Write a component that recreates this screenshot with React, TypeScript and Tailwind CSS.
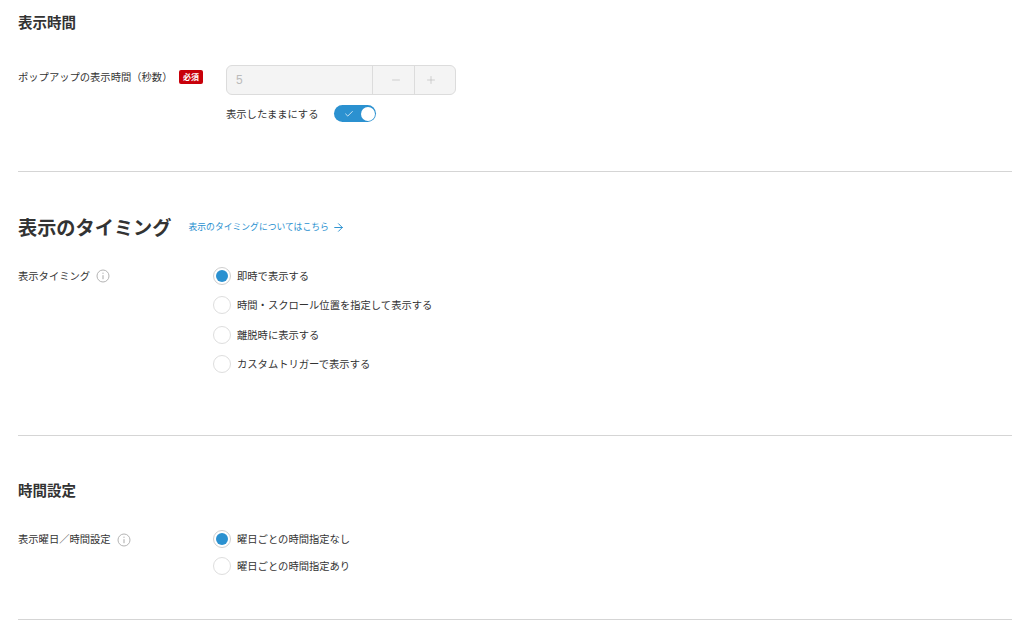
import React from "react";
import { ArrowRight, Check, Minus, Plus } from "lucide-react";

function Radio({ checked, label }: { checked?: boolean; label: string }) {
  return (
    <div className="flex items-center gap-[6px] h-[20px]">
      <span className={`w-[18px] h-[18px] rounded-full border bg-white flex items-center justify-center shrink-0 ${checked ? "border-[#cfcfcf]" : "border-[#dedede]"}`}>
        {checked && <span className="w-[12px] h-[12px] rounded-full bg-[#2b91d0]" />}
      </span>
      <span className="text-[10.3px] text-[#333] whitespace-nowrap">{label}</span>
    </div>
  );
}

function Info() {
  return (
    <svg width="14" height="14" viewBox="0 0 14 14" fill="none" className="shrink-0 mt-[1px]">
      <circle cx="7" cy="7" r="6" stroke="#b4b4b4" strokeWidth="1" />
      <path d="M7 6.2V10.2" stroke="#a8a8a8" strokeWidth="1" />
      <circle cx="7" cy="4.2" r="0.6" fill="#a8a8a8" />
    </svg>
  );
}

export default function App() {
  return (
    <div className="w-[1024px] h-[631px] overflow-hidden bg-white text-[#333] pl-[18px] pr-[12px]" style={{ fontFamily: '"Noto Sans CJK JP", "Liberation Sans", sans-serif' }}>
      <section className="h-[172px] border-b border-[#d5d5d5] pt-[12px]">
        <h2 className="text-[14.5px] font-bold leading-[20px]">表示時間</h2>
        <div className="flex mt-[33px]">
          <div className="w-[208px] flex items-start gap-[6.5px] pt-[5px]">
            <span className="text-[10.3px] leading-[14px] whitespace-nowrap">ポップアップの表示時間（秒数）</span>
            <span className="bg-[#c8000a] text-white text-[8px] font-bold rounded-[2px] w-[24px] h-[14px] leading-[14px] text-center shrink-0">必須</span>
          </div>
          <div>
            <div className="flex w-[230px] h-[30px] border border-[#dcdcdc] rounded-[6px] bg-[#f4f4f4]">
              <span className="flex-1 pl-[9px] pt-[1px] text-[12px] leading-[27px] text-[#bbb]" style={{ fontFamily: '"Liberation Sans", sans-serif' }}>5</span>
              <span className="w-[42px] border-l border-[#dcdcdc] pl-[5px] flex items-center justify-center"><Minus size={12} strokeWidth={1.2} className="text-[#b5b5b5]" /></span>
              <span className="w-[41px] border-l border-[#dcdcdc] pr-[8px] flex items-center justify-center"><Plus size={12} strokeWidth={1.2} className="text-[#b5b5b5]" /></span>
            </div>
            <div className="flex items-center gap-[16px] mt-[10px]">
              <span className="text-[10.3px] whitespace-nowrap">表示したままにする</span>
              <span className="w-[42px] h-[17px] rounded-full bg-[#2b91d0] flex items-center justify-end gap-[7px] pr-[1.5px]">
                <Check size={10} strokeWidth={1.8} className="text-white" />
                <span className="w-[14px] h-[14px] rounded-full bg-white" />
              </span>
            </div>
          </div>
        </div>
      </section>
      <section className="h-[264px] border-b border-[#d5d5d5] pt-[41px]">
        <div className="flex items-center gap-[17px]">
          <h2 className="text-[19.2px] font-bold leading-[28px] whitespace-nowrap">表示のタイミング</h2>
          <a className="flex items-center gap-[3px] text-[8.8px] text-[#2b91d0] whitespace-nowrap">表示のタイミングについてはこちら<ArrowRight size={13} strokeWidth={1.8} /></a>
        </div>
        <div className="flex mt-[24.5px]">
          <div className="w-[195px] flex gap-[6px] items-center h-[20px]"><span className="text-[10.3px]">表示タイミング</span><Info /></div>
          <div className="flex flex-col gap-[9.5px]">
            <Radio checked label="即時で表示する" />
            <Radio label="時間・スクロール位置を指定して表示する" />
            <Radio label="離脱時に表示する" />
            <Radio label="カスタムトリガーで表示する" />
          </div>
        </div>
      </section>
      <section className="h-[184px] border-b border-[#d5d5d5] pt-[44px]">
        <h2 className="text-[14.5px] font-bold leading-[20px]">時間設定</h2>
        <div className="flex mt-[29px]">
          <div className="w-[195px] flex gap-[6px] items-center h-[20px]"><span className="text-[10.3px] whitespace-nowrap">表示曜日／時間設定</span><Info /></div>
          <div className="flex flex-col gap-[7px]">
            <Radio checked label="曜日ごとの時間指定なし" />
            <Radio label="曜日ごとの時間指定あり" />
          </div>
        </div>
      </section>
    </div>
  );
}
